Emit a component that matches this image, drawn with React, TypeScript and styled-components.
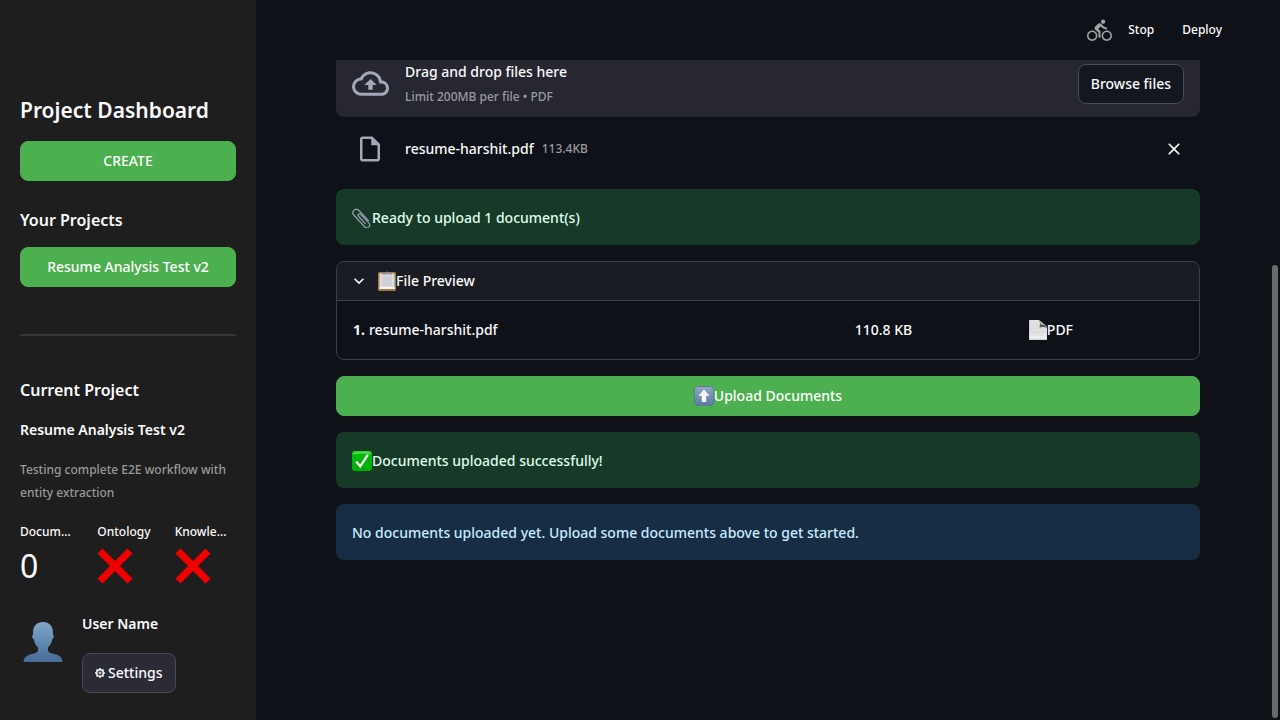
import React from "react";
import styled, { createGlobalStyle } from "styled-components";
import {
  MdClose,
  MdDirectionsBike,
  MdExpandMore,
  MdOutlineCloudUpload,
  MdOutlineInsertDriveFile,
} from "react-icons/md";

const GlobalStyle = createGlobalStyle`
  *, *::before, *::after { box-sizing: border-box; }
  html { background: #0e1117; }
  body {
    margin: 0;
    font-family: "Noto Sans", sans-serif;
    font-size: 14px;
    line-height: 24px;
    color: #fafafa;
    -webkit-font-smoothing: antialiased;
  }
  button { font: inherit; color: inherit; cursor: pointer; }
  h1, h2, h3, p, ul, dl, dd, dt { margin: 0; padding: 0; }
  svg { display: block; flex: none; }
`;

const Shell = styled.div`
  display: flex;
  min-height: 100vh;
`;

const Sidebar = styled.aside`
  flex: none;
  width: 256px;
  padding: 95px 20px 24px;
  background: #1e1e1e;
`;

const Title = styled.h1`
  margin-bottom: 16px;
  font-size: 21px;
  line-height: 30px;
  font-weight: 600;
`;

const SectionTitle = styled.h2`
  font-size: 16px;
  line-height: 26px;
  font-weight: 600;
  margin: 26px 0 14px;
`;

const PrimaryButton = styled.button`
  display: flex;
  align-items: center;
  justify-content: center;
  width: 100%;
  height: 40px;
  padding: 0 12px;
  border: 1px solid #4caf50;
  border-radius: 8px;
  background: #4caf50;
  color: #ffffff;
  font-weight: 500;
`;

const Divider = styled.hr`
  height: 2px;
  margin: 47px 0 41px;
  border: 0;
  background: #363636;
`;

const Strong = styled.p`
  line-height: 26px;
  font-weight: 600;
`;

const Caption = styled.p`
  margin: 15px 0 16px;
  font-size: 12px;
  line-height: 23px;
  font-weight: 500;
  color: #999999;
`;

const Metrics = styled.dl`
  display: grid;
  grid-template-columns: repeat(3, minmax(0, 1fr));
  gap: 16px;
`;

const MetricLabel = styled.dt`
  font-size: 12px;
  line-height: 24px;
  font-weight: 500;
  white-space: nowrap;
`;

const MetricValue = styled.dd`
  display: flex;
  align-items: center;
  height: 44px;
  font-size: 32px;
  line-height: 44px;
`;

const User = styled.div`
  display: flex;
  gap: 16px;
  margin-top: 23px;
`;

const Avatar = styled.div`
  width: 46px;
  padding: 11px 0 0 3px;
`;

const UserInfo = styled.div`
  display: grid;
  gap: 16px;
  justify-items: start;
`;

const SecondaryButton = styled.button<{ $tone: string }>`
  display: flex;
  align-items: center;
  gap: 3px;
  height: 40px;
  padding: 0 12px;
  border: 1px solid #494a52;
  border-radius: 8px;
  background: ${(p) => p.$tone};
  color: #fafafa;
  font-weight: 500;
`;

const Main = styled.main`
  flex: 1;
  min-width: 0;
`;

const Toolbar = styled.header`
  display: flex;
  align-items: center;
  justify-content: flex-end;
  gap: 28px;
  height: 60px;
  padding-right: 58px;
`;

const Running = styled.div`
  display: flex;
  align-items: center;
  gap: 16px;
  color: #a0a1a3;
`;

const ToolbarButton = styled.button`
  padding: 0;
  border: 0;
  background: none;
  color: #fafafa;
  font-size: 12px;
  font-weight: 500;
`;

const Content = styled.div`
  display: flex;
  flex-direction: column;
  gap: 16px;
  padding: 0 80px;
`;

const DropZone = styled.section`
  display: flex;
  align-items: center;
  gap: 16px;
  padding: 0 16px 10px;
  height: 57px;
  border-radius: 0 0 8px 8px;
  background: #262730;
  color: #a3a8b8;
`;

const DropText = styled.div`
  flex: 1;
  padding-top: 2px;
  font-weight: 500;
  color: #fafafa;
`;

const Muted = styled.span`
  font-size: 12px;
  font-weight: 500;
  color: #9a9b9f;
`;

const FileRow = styled.div`
  display: flex;
  align-items: center;
  gap: 8px;
  height: 32px;
  margin-bottom: 8px;
  font-weight: 500;
`;

const FileIcon = styled.div`
  display: flex;
  justify-content: center;
  width: 61px;
  padding-right: 10px;
  padding-left: 16px;
  color: #a3a8b8;
`;

const IconButton = styled.button`
  margin: 0 16px 0 auto;
  padding: 0;
  border: 0;
  background: none;
`;

const Alert = styled.div<{ $kind: "success" | "info" }>`
  display: flex;
  align-items: center;
  min-height: 56px;
  padding: 17px 16px 15px;
  border-radius: 8px;
  font-weight: 500;
  background: ${(p) => (p.$kind === "success" ? "#173928" : "#172d43")};
  color: ${(p) => (p.$kind === "success" ? "#dffde9" : "#c7ebff")};
`;

const Expander = styled.section`
  border: 1px solid #3e4044;
  border-radius: 8px;
  overflow: hidden;
  font-weight: 500;
`;

const ExpanderHeader = styled.button`
  display: flex;
  align-items: center;
  width: 100%;
  height: 39px;
  padding: 0 12px;
  border: 0;
  border-bottom: 1px solid #3e4044;
  background: #1a1c24;
  font-weight: 500;
`;

const ChevronSlot = styled.span`
  width: 29px;
`;

const PreviewRow = styled.div`
  display: grid;
  grid-template-columns: 25fr 8fr 8fr;
  gap: 20px;
  padding: 17px 16px;
`;

const Cell = styled.div`
  display: flex;
  align-items: center;
  gap: 4px;
`;

const FileType = styled(Cell)`
  gap: 0;
`;

const ScrollThumb = styled.div`
  position: fixed;
  top: 265px;
  right: 2px;
  bottom: 2px;
  width: 6px;
  border-radius: 3px;
  background: #6b6b6e;
`;

const CLIP_WIRE =
  "M17 1H4.200a3.200 3.200 0 0 0 0 6.400H19a2.600 2.600 0 0 0 0-5.200H8a1.400 1.400 0 0 0 0 2.800h9";

const Paperclip = () => (
  <svg width="20" height="20" viewBox="1.500 1 18 18.500" fill="none" strokeLinecap="round">
    <g transform="translate(5.500 -.5) rotate(47)">
      <path d={CLIP_WIRE} stroke="#4f5f66" strokeWidth="1.500" />
      <path d={CLIP_WIRE} stroke="#93a1ab" strokeWidth=".9" />
    </g>
  </svg>
);

const Clipboard = () => (
  <svg width="18" height="20" viewBox="0 0 18 20">
    <rect y="1" width="18" height="19" rx="1.500" fill="#a47842" />
    <rect x="1.500" y="2.500" width="15" height="15.500" fill="#dcdddf" />
    <rect x="4" y="5" width="10" height="10" fill="#cfd0d3" />
    <rect x="1.500" y="16" width="15" height="2" fill="#f5f5f5" />
    <path d="M4 3.500V2h3.500a1.500 1.500 0 0 1 3 0H14v1.500z" fill="#9298a0" />
  </svg>
);

const PageEmoji = () => (
  <svg width="18" height="20" viewBox="0 0 18 20">
    <path d="M0 0h10l8 7v13H0z" fill="#e1e1e1" />
    <path d="M0 14h18v6H0z" fill="#ececec" />
    <path d="M10 0c1.500 2 1 5 .5 7.500 2.500-.8 5-.8 7.500.5C16 5 13 2 10 0z" fill="#55585a" />
    <path d="M10 0c1.200 1.600 1.500 3 1.500 4.500 2.500-.3 4.500.7 6.500 3C16 5 13 2 10 0z" fill="#b9b9b9" />
    <path d="M2 6h7M2 9h13M2 12h13M2 15h13" stroke="#d2d2d2" strokeWidth=".7" />
    <path d="M.3 0v19.700H18" fill="none" stroke="#b6b6b6" strokeWidth=".6" />
  </svg>
);

const UpArrow = () => (
  <svg width="20" height="20" viewBox="0 0 20 20">
    <defs>
      <linearGradient id="up" x2="0" y2="1">
        <stop stopColor="#91aac5" />
        <stop offset="1" stopColor="#587a9b" />
      </linearGradient>
    </defs>
    <rect x=".5" y=".5" width="19" height="19" rx="3" fill="url(#up)" stroke="#607b97" />
    <path d="M10 3.500 4.500 9.800h3.300V16h4.400V9.800h3.300z" fill="#fff" />
  </svg>
);

const Check = () => (
  <svg width="20" height="20" viewBox="0 0 20 20">
    <defs>
      <linearGradient id="ok" x2="0" y2="1">
        <stop stopColor="#35d32f" />
        <stop offset=".2" stopColor="#00b909" />
        <stop offset="1" stopColor="#00ad04" />
      </linearGradient>
    </defs>
    <rect width="20" height="20" rx="3" fill="url(#ok)" />
    <path d="M1.500 2.500Q10 1 18.500 2.500" fill="none" stroke="#78e86e" strokeWidth="1.200" />
    <path d="m4.200 10.500 4 4.800 7.600-11.500" fill="none" stroke="#fff" strokeWidth="2.200" />
  </svg>
);

const Cross = () => (
  <svg width="36" height="36" viewBox="0 0 36 36" role="img" aria-label="No">
    <path
      d="M5.500.5 18 13 30.500.5l5 5L23 18l12.500 12.500-5 5L18 23 5.500 35.500l-5-5L13 18 .5 5.500z"
      fill="#f10000"
    />
  </svg>
);

const Bust = () => (
  <svg width="40" height="40" viewBox="0 0 40 40">
    <defs>
      <linearGradient id="bust" x2="0" y2="1">
        <stop stopColor="#80a7c9" />
        <stop offset="1" stopColor="#456b97" />
      </linearGradient>
    </defs>
    <path
      d="M20 0c6.500 0 10 4.500 10 10.500v2.200c1.300.2.800 4-.8 4.800-.8 4-2.300 6-4.200 8v3.200c1.500 3 6 2.800 9.500 4.300 3.500 1.300 4.800 3.700 5 7H.5c.2-3.300 1.500-5.700 5-7 3.500-1.500 8-1.300 9.500-4.300v-3.200c-1.900-2-3.400-4-4.200-8-1.600-.8-2.100-4.600-.8-4.800v-2.200C10 4.500 13.500 0 20 0z"
      fill="url(#bust)"
    />
  </svg>
);

const Gear = () => (
  <svg width="10" height="12" viewBox="0 0 10 12" fill="none" stroke="#fafafa">
    <circle cx="5" cy="6" r="3.300" strokeWidth="1.500" />
    <circle cx="5" cy="6" r="1" strokeWidth="1" />
    <path
      d="M5 1v1.500M5 9.500V11M0 6h1.500M8.500 6H10M1.500 2.500l1 1M7.500 8.500l1 1M8.500 2.500l-1 1M2.500 8.500l-1 1"
      strokeWidth="1.600"
    />
  </svg>
);

export default function App() {
  return (
    <Shell>
      <GlobalStyle />
      <Sidebar>
        <Title>Project Dashboard</Title>
        <PrimaryButton>CREATE</PrimaryButton>
        <SectionTitle>Your Projects</SectionTitle>
        <PrimaryButton>Resume Analysis Test v2</PrimaryButton>
        <Divider />
        <SectionTitle>Current Project</SectionTitle>
        <Strong>Resume Analysis Test v2</Strong>
        <Caption>Testing complete E2E workflow with entity extraction</Caption>
        <Metrics>
          <div>
            <MetricLabel>Docum…</MetricLabel>
            <MetricValue>0</MetricValue>
          </div>
          <div>
            <MetricLabel>Ontology</MetricLabel>
            <MetricValue><Cross /></MetricValue>
          </div>
          <div>
            <MetricLabel>Knowle…</MetricLabel>
            <MetricValue><Cross /></MetricValue>
          </div>
        </Metrics>
        <User>
          <Avatar><Bust /></Avatar>
          <UserInfo>
            <Strong>User Name</Strong>
            <SecondaryButton $tone="#2b2b36"><Gear />Settings</SecondaryButton>
          </UserInfo>
        </User>
      </Sidebar>
      <Main>
        <Toolbar>
          <Running>
            <MdDirectionsBike size={25} />
            <ToolbarButton>Stop</ToolbarButton>
          </Running>
          <ToolbarButton>Deploy</ToolbarButton>
        </Toolbar>
        <Content>
          <DropZone>
            <MdOutlineCloudUpload size={37} />
            <DropText>
              <p>Drag and drop files here</p>
              <Muted>Limit 200MB per file • PDF</Muted>
            </DropText>
            <SecondaryButton $tone="#131720">Browse files</SecondaryButton>
          </DropZone>
          <FileRow>
            <FileIcon><MdOutlineInsertDriveFile size={30} /></FileIcon>
            <span>resume-harshit.pdf</span>
            <Muted>113.4KB</Muted>
            <IconButton aria-label="Remove file"><MdClose size={20} /></IconButton>
          </FileRow>
          <Alert $kind="success"><Paperclip />Ready to upload 1 document(s)</Alert>
          <Expander>
            <ExpanderHeader aria-expanded="true">
              <ChevronSlot><MdExpandMore size={20} /></ChevronSlot>
              <Clipboard />File Preview
            </ExpanderHeader>
            <PreviewRow>
              <Cell><b>1.</b> resume-harshit.pdf</Cell>
              <Cell>110.8 KB</Cell>
              <FileType><PageEmoji />PDF</FileType>
            </PreviewRow>
          </Expander>
          <PrimaryButton><UpArrow />Upload Documents</PrimaryButton>
          <Alert $kind="success"><Check />Documents uploaded successfully!</Alert>
          <Alert $kind="info">
            No documents uploaded yet. Upload some documents above to get started.
          </Alert>
        </Content>
      </Main>
      <ScrollThumb />
    </Shell>
  );
}
